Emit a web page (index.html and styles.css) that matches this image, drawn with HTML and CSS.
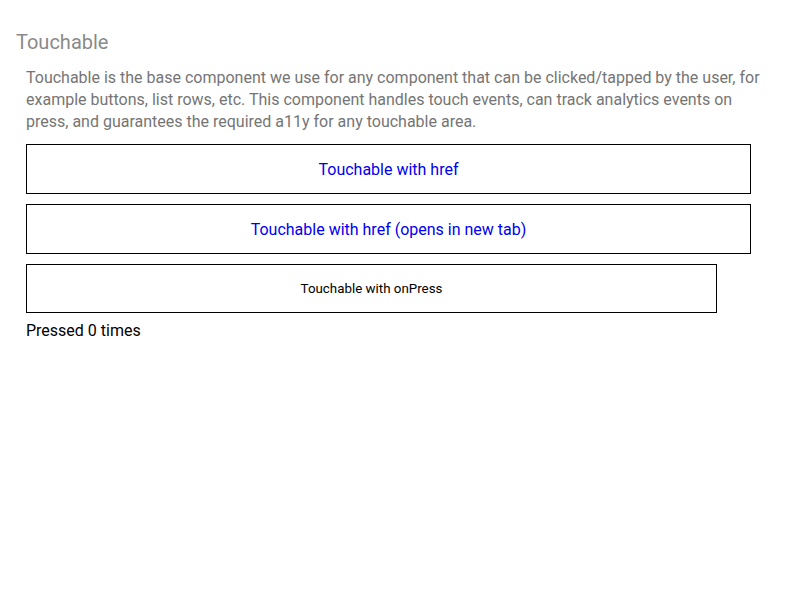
FILE: index.html
```html
<!DOCTYPE html>
<html>
<head>
<meta charset="utf-8">
<link rel="stylesheet" href="styles.css">
</head>
<body>
<div class="page">
  <h1 class="title">Touchable</h1>
  <div class="content">
    <p class="desc">Touchable is the base component we use for any component that can be clicked/tapped by the user, for example buttons, list rows, etc. This component handles touch events, can track analytics events on press, and guarantees the required a11y for any touchable area.</p>
    <a class="touch link" href="#">Touchable with href</a>
    <a class="touch link" href="#">Touchable with href (opens in new tab)</a>
    <div class="touch press">Touchable with onPress</div>
    <div class="count">Pressed 0 times</div>
  </div>
</div>
</body>
</html>
```

FILE: styles.css
```css
html, body {
  margin: 0;
  padding: 0;
  background: #fff;
  font-family: Roboto, "Liberation Sans", sans-serif;
}
.page {
  padding: 30px 16px 0 16px;
}
.title {
  margin: 0;
  font-size: 20px;
  font-weight: 400;
  line-height: 24px;
  color: #8a8a8a;
}
.content {
  padding: 0 10px;
  display: flex;
  flex-direction: column;
  align-items: flex-start;
}
.desc {
  margin: 13px 0 11px 0;
  font-size: 16px;
  line-height: 22px;
  color: #757575;
}
.touch {
  box-sizing: border-box;
  border: 1px solid #000;
  display: flex;
  align-items: center;
  justify-content: center;
  text-decoration: none;
  margin-bottom: 10px;
}
.link {
  width: 725px;
  height: 50px;
  color: #0000ee;
  font-size: 16px;
}
.press {
  width: 691px;
  height: 49px;
  color: #000;
  font-size: 13.33px;
  margin-bottom: 8px;
}
.count {
  font-size: 16px;
  line-height: 20px;
  color: #000;
}
```
